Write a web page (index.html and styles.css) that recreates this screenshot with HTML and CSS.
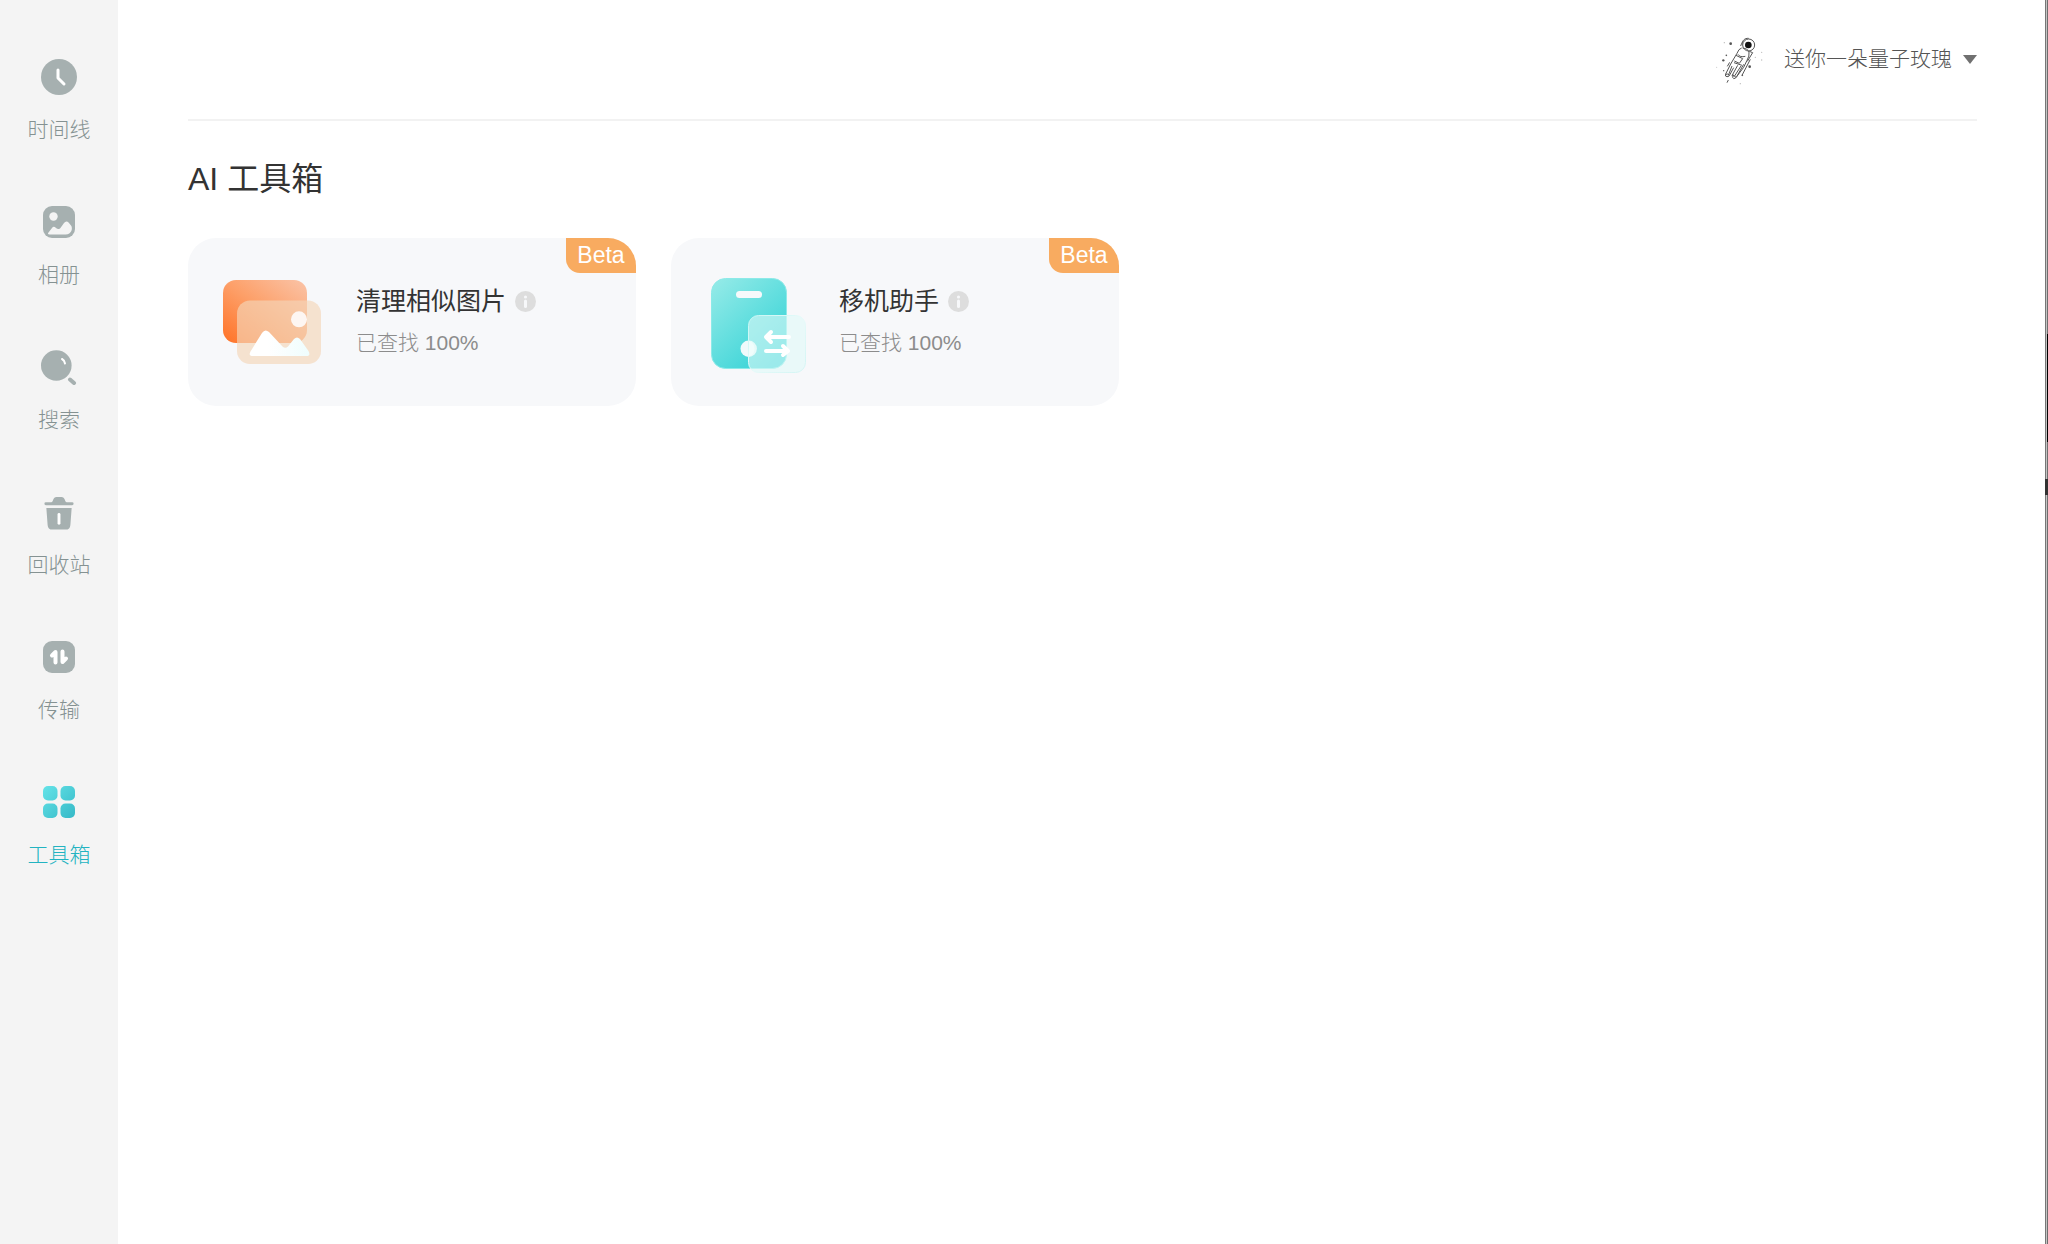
FILE: index.html
```html
<!DOCTYPE html>
<html lang="zh-CN">

	<head>
		<meta charset="UTF-8">
		<meta name="viewport" content="width=device-width, initial-scale=1.0">
		<title>AI 工具箱</title>
		<link rel="stylesheet" href="styles.css">
	</head>

	<body>
		<nav class="sidebar">
			<a href="#timeline">
				<svg viewBox="0 0 36 36">
					<circle cx="18" cy="18" r="18" />
					<path class="line" d="M17 11v8l6 6" />
				</svg>
				<span>时间线</span>
			</a>
			<a href="#album">
				<svg viewBox="0 0 36 36">
					<rect x="2" y="2" width="32" height="32" rx="9" />
					<circle class="light" cx="12.5" cy="12.5" r="4.2" />
					<path class="light" d="M7.500 28.500 11 24c1.200-1.600 2.500-1.500 4 0 1.700 1.600 3.500 1.500 4.800-.5l3.200-4.500c1.500-2 3.200-2 4.800-.2l2.200 2.700c2 2.500.8 9-5.500 9H8.500c-1.500 0-2-.8-1-2z" />
				</svg>
				<span>相册</span>
			</a>
			<a href="#search">
				<svg viewBox="0 0 36 36">
					<circle cx="15.300" cy="16.500" r="15.300" />
					<path class="line thin" d="M21 10q2.600 1.400 3 4.500" />
					<path class="handle" d="M29 30.500l4 3.500" />
				</svg>
				<span>搜索</span>
			</a>
			<a href="#recycle">
				<svg viewBox="0 0 36 37">
					<path d="M4.500 8.500H10c1.200 0 1.500-1 2-2.500.6-2 1.600-3 3.500-3h5c1.900 0 2.900 1 3.500 3 .5 1.500.8 2.500 2 2.500h5.500a1.500 1.500 0 0 1 0 3h-27a1.500 1.500 0 0 1 0-3z" />
					<path d="M5 14.500h26l-1.300 17.300c-.2 3.200-1.800 4.800-5 4.800H11.300c-3.200 0-4.800-1.600-5-4.800z" />
					<path class="line" d="M18 21v9" />
				</svg>
				<span>回收站</span>
			</a>
			<a href="#transfer">
				<svg viewBox="0 0 36 36">
					<rect x="2" y="2" width="32" height="32" rx="9" />
					<path class="line bold" d="M14.500 23.500V13l-3.500 3.500M21.500 12.500V23l3.500-3.500" />
				</svg>
				<span>传输</span>
			</a>
			<a href="#toolbox" class="active">
				<svg viewBox="0 0 36 36">
					<defs>
						<linearGradient id="tool" gradientUnits="userSpaceOnUse" x1="2" y1="2" x2="34" y2="34">
							<stop offset="0" stop-color="#64e3e8" />
							<stop offset="1" stop-color="#36b9c7" />
						</linearGradient>
					</defs>
					<g fill="url(#tool)">
						<rect x="2" y="2" width="14.500" height="14.500" rx="5" />
						<rect x="19.500" y="2" width="14.500" height="14.500" rx="5" />
						<rect x="2" y="19.500" width="14.500" height="14.500" rx="5" />
						<rect x="19.500" y="19.500" width="14.500" height="14.500" rx="5" />
					</g>
				</svg>
				<span>工具箱</span>
			</a>
		</nav>

		<main>
			<header>
				<button type="button" class="user">
					<!-- 宇航员头像 -->
					<svg class="avatar" viewBox="0 0 180 180">
						<circle cx="116" cy="45" r="18" />
						<circle class="visor" cx="115" cy="45" r="10" />
						<path d="M96 44c0-12 8-20 20-19M92 48c2-6 4-10 7-13M95 54q-9 2-14 16L62 102 47 132q-3 8 4 8 6 1 8-5l12-22M98 54q16 2 19 12 2 12-6 25l-10 21-24 32q-7 5-9-2l2-8M84 73q6 10 22 6M78 76l20 10-10 14-15-7M72 98l24 8M118 64l10 4-16 26M101 103l-21 37M66 108l-11 28M83 106l-16 29M93 108l-20 31M47 133q7-3 11 3M65 137q8-2 13 5M121 88l-25 48M59 97l-7 12" />
						<g class="star">
							<circle cx="62" cy="41" r="4" />
							<circle cx="49" cy="76" r="2.500" />
							<circle cx="40" cy="91" r="3.500" />
							<circle cx="119" cy="110" r="4" />
							<circle cx="41" cy="122" r="2" />
							<circle cx="97" cy="136" r="2.500" />
							<path d="M55 150l-4 8" />
						</g>
						<g class="dust">
							<circle cx="43" cy="38" r="2" />
							<circle cx="136" cy="82" r="2" />
							<circle cx="155" cy="90" r="2" />
							<circle cx="155" cy="67" r="2" />
							<circle cx="91" cy="161" r="2" />
							<circle cx="20" cy="112" r="1.500" />
						</g>
					</svg>
					<span>送你一朵量子玫瑰</span>
					<svg class="arrow" viewBox="0 0 14 10">
						<path d="M0 0h14L7 9z" />
					</svg>
				</button>
			</header>

			<h1>AI 工具箱</h1>

			<div class="cards">
				<section class="card">
					<svg class="pic" viewBox="0 0 100 104">
						<defs>
							<linearGradient id="back" x1="0" y1="1" x2="1" y2="0">
								<stop offset="0" stop-color="#ff7226" />
								<stop offset=".5" stop-color="#fd9f68" />
								<stop offset="1" stop-color="#fac4a8" />
							</linearGradient>
							<linearGradient id="snow" x1="0" y1="0" x2="1" y2="0">
								<stop offset=".3" stop-color="#fff" />
								<stop offset="1" stop-color="#effdfd" />
							</linearGradient>
						</defs>
						<rect x="0" y="10" width="84" height="63" rx="13" fill="url(#back)" />
						<rect x="14" y="30.500" width="84" height="63.500" rx="13" fill="#f5d6b8" fill-opacity=".65" />
						<circle cx="76" cy="49.300" r="8" fill="#fdf6f2" />
						<path d="M27.500 81.500 39 63q3-4.500 7-1l13.500 14.500q2.800 2.500 5.500 0l6-7.500q3-3 6 0l8.500 12q2.500 5-2 5H30q-5 0-2.500-4.500z" fill="url(#snow)" />
					</svg>
					<div class="info">
						<h2>清理相似图片
							<button type="button" class="tip" aria-label="说明">
								<svg viewBox="0 0 21 21">
									<circle cx="10.500" cy="10.500" r="10.500" />
									<circle class="dot" cx="10.500" cy="6" r="1.600" />
									<path class="stem" d="M10.500 10v5.500" />
								</svg>
							</button>
						</h2>
						<p>已查找 100%</p>
					</div>
					<span class="beta">Beta</span>
				</section>

				<section class="card">
					<svg class="pic" viewBox="0 0 100 104">
						<defs>
							<linearGradient id="phone" x1="0" y1="0" x2=".8" y2="1">
								<stop offset="0" stop-color="#97ebe8" />
								<stop offset=".5" stop-color="#65dfdf" />
								<stop offset="1" stop-color="#35d2d6" />
							</linearGradient>
							<linearGradient id="edge" x1="0" y1="0" x2="1" y2="1">
								<stop offset="0" stop-color="#c4f7f4" />
								<stop offset=".5" stop-color="#e6faf9" />
								<stop offset="1" stop-color="#d3f5f4" />
							</linearGradient>
						</defs>
						<rect x="5.500" y="8.500" width="75" height="90" rx="14" fill="url(#phone)" stroke="#8ceae8" />
						<rect x="30" y="21" width="26" height="7" rx="3.500" fill="#f7f9fb" />
						<circle cx="42.700" cy="78.700" r="8.200" fill="#f0fafb" />
						<rect x="42.500" y="45.500" width="57" height="57" rx="10" fill="#dffaf8" fill-opacity=".6" />
						<path d="M43 71a8.200 8.200 0 0 1 0 15.500z" fill="#f0fdfc" />
						<rect x="42.500" y="45.500" width="57" height="57" rx="10" fill="none" stroke="url(#edge)" />
						<path d="M83 67H60l5-5m-5 5l5 5M60 81h22l-5-5m5 5l-5 4" fill="none" stroke="#fff" stroke-width="4" stroke-linecap="round" stroke-linejoin="round" />
					</svg>
					<div class="info">
						<h2>移机助手
							<button type="button" class="tip" aria-label="说明">
								<svg viewBox="0 0 21 21">
									<circle cx="10.500" cy="10.500" r="10.500" />
									<circle class="dot" cx="10.500" cy="6" r="1.600" />
									<path class="stem" d="M10.500 10v5.500" />
								</svg>
							</button>
						</h2>
						<p>已查找 100%</p>
					</div>
					<span class="beta">Beta</span>
				</section>
			</div>
		</main>

		<div class="window-edge"></div>
	</body>

</html>
```

FILE: styles.css
```css
* {
	margin: 0;
	padding: 0;
	box-sizing: border-box;
}

body {
	display: flex;
	min-height: 100vh;
	background: #fff;
	font-family: "Liberation Sans", "Noto Sans CJK SC", sans-serif;
	font-weight: 300;
	font-size: 21px;
	color: #333;
}

button {
	border: 0;
	background: none;
	font: inherit;
	color: inherit;
	cursor: pointer;
}

/* 左侧导航 */
.sidebar {
	flex: none;
	display: flex;
	flex-direction: column;
	gap: 59px;
	width: 118px;
	padding-top: 59px;
	background: #f4f4f4;
}

.sidebar a {
	display: flex;
	flex-direction: column;
	align-items: center;
	gap: 20px;
	line-height: 30px;
	color: #859292;
	text-decoration: none;
}

.sidebar svg {
	width: 36px;
	height: 36px;
	fill: #a6b0b0;
}

.sidebar .light {
	fill: #f4f4f4;
}

.sidebar .line {
	fill: none;
	stroke: #fff;
	stroke-width: 3;
	stroke-linecap: round;
	stroke-linejoin: round;
}

.sidebar .thin {
	stroke-width: 2;
}

.sidebar .bold {
	stroke-width: 4;
}

.sidebar .handle {
	stroke: #a6b0b0;
	stroke-width: 4;
	stroke-linecap: round;
}

.sidebar .active {
	color: #22b3c1;
}

/* 右侧内容 */
main {
	flex: 1;
	padding: 0 68px 0 70px;
}

header {
	display: flex;
	justify-content: flex-end;
	height: 121px;
	border-bottom: 2px solid #f2f2f2;
}

.user {
	display: flex;
	align-items: center;
	line-height: 28px;
	color: #555;
}

.user span {
	padding-bottom: 2px;
}

.avatar {
	width: 60px;
	height: 60px;
	margin-right: 14px;
	fill: none;
	stroke: #555;
	stroke-width: 3;
}

.avatar .visor {
	fill: #111;
	stroke: none;
}

.avatar .star circle {
	fill: #555;
	stroke: none;
}

.avatar .dust {
	fill: #bbb;
	stroke: none;
}

.arrow {
	width: 14px;
	height: 10px;
	margin-left: 11px;
	fill: #707070;
}

h1 {
	margin: 36px 0 37px;
	font-size: 32px;
	font-weight: 400;
	line-height: 44px;
}

.cards {
	display: flex;
	flex-wrap: wrap;
	gap: 35px;
}

.card {
	position: relative;
	display: flex;
	align-items: center;
	gap: 33px;
	width: 448px;
	height: 168px;
	padding: 0 35px;
	overflow: hidden;
	border-radius: 28px;
	background: #f7f8fa;
}

.pic {
	flex: none;
	width: 100px;
	height: 104px;
}

.info {
	display: flex;
	flex-direction: column;
	gap: 6px;
	line-height: 36px;
}

.info h2 {
	display: flex;
	align-items: center;
	gap: 9px;
	font-size: 25px;
	font-weight: 400;
}

.info p {
	color: #8c8c8c;
}

.tip,
.tip svg {
	display: block;
	width: 21px;
	height: 21px;
	fill: #ddd;
}

.tip .dot {
	fill: #f7f8fa;
}

.tip .stem {
	stroke: #f7f8fa;
	stroke-width: 3;
	stroke-linecap: round;
}

.beta {
	position: absolute;
	top: 0;
	right: 0;
	width: 70px;
	height: 35px;
	border-radius: 0 0 0 14px;
	background: #f8ab60;
	color: #fff;
	font-size: 23px;
	line-height: 35px;
	text-align: center;
}

/* 窗口右边框 */
.window-edge {
	flex: none;
	width: 3px;
	background:
		linear-gradient(#333, #333) 0 479px / 3px 16px no-repeat,
		linear-gradient(#000, #000) 2px 334px / 1px 108px no-repeat,
		linear-gradient(90deg, #777 1px, #c4c4c4 1px, #c4c4c4 2px, #6e6e6e 2px);
}
```
